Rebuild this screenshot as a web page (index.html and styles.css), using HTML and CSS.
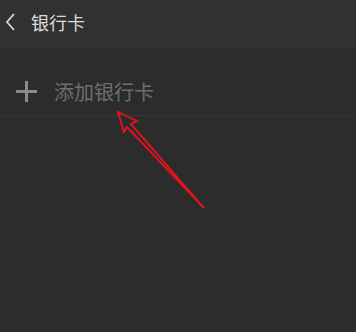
FILE: index.html
```html
<!DOCTYPE html>
<html>
<head>
<meta charset="utf-8">
<link rel="stylesheet" href="styles.css">
</head>
<body>
<div class="page">
  <header class="header">
    <svg class="back" width="12" height="18" viewBox="0 0 12 18"><path d="M10 1 L3 9 L10 17" fill="none" stroke="#d8d8d8" stroke-width="1.8"/></svg>
    <span class="title">银行卡</span>
  </header>
  <div class="row">
    <svg class="plus" width="21" height="21" viewBox="0 0 21 21"><path d="M10.5 0 V21 M0 10.5 H21" stroke="#8a8a8a" stroke-width="3"/></svg>
    <span class="add">添加银行卡</span>
  </div>
  <svg class="arrow" width="356" height="332" viewBox="0 0 356 332">
    <polygon points="118,112 137,121 131,124 204,208 127,127 124,132" fill="none" stroke="#e8121c" stroke-width="1.9" stroke-linejoin="miter"/>
  </svg>
</div>
</body>
</html>
```
FILE: styles.css
```css
html, body { margin: 0; padding: 0; }
body { background: #2c2c2c; font-family: "Noto Sans CJK SC", "Noto Sans", sans-serif; width: 356px; height: 332px; overflow: hidden; }
.page { position: relative; width: 356px; height: 332px; background: #2c2c2c; }
.header { height: 48px; background: #313131; display: flex; align-items: center; padding-left: 4px; padding-bottom: 4px; box-sizing: border-box; }
.back { margin-right: 15px; }
.title { color: #dcdcdc; font-size: 18px; }
.row { height: 68px; display: flex; align-items: center; padding-left: 16px; padding-top: 20px; border-bottom: 1px solid #363636; box-sizing: border-box; }
.plus { margin-right: 17px; }
.add { color: #6e6e6e; font-size: 20px; }
.arrow { position: absolute; left: 0; top: 0; pointer-events: none; }
```
